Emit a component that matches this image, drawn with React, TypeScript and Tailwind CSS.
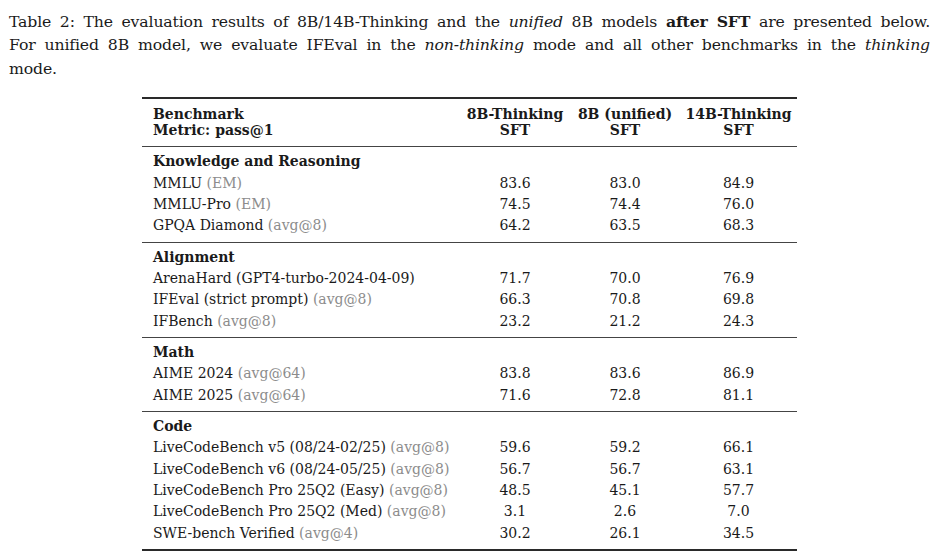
type Row = { name: string; note?: string; v: [string, string, string] }
type Section = { title: string; rows: Row[] }

const sections: Section[] = [
  {
    title: 'Knowledge and Reasoning',
    rows: [
      { name: 'MMLU', note: '(EM)', v: ['83.6', '83.0', '84.9'] },
      { name: 'MMLU-Pro', note: '(EM)', v: ['74.5', '74.4', '76.0'] },
      { name: 'GPQA Diamond', note: '(avg@8)', v: ['64.2', '63.5', '68.3'] },
    ],
  },
  {
    title: 'Alignment',
    rows: [
      { name: 'ArenaHard (GPT4-turbo-2024-04-09)', v: ['71.7', '70.0', '76.9'] },
      { name: 'IFEval (strict prompt)', note: '(avg@8)', v: ['66.3', '70.8', '69.8'] },
      { name: 'IFBench', note: '(avg@8)', v: ['23.2', '21.2', '24.3'] },
    ],
  },
  {
    title: 'Math',
    rows: [
      { name: 'AIME 2024', note: '(avg@64)', v: ['83.8', '83.6', '86.9'] },
      { name: 'AIME 2025', note: '(avg@64)', v: ['71.6', '72.8', '81.1'] },
    ],
  },
  {
    title: 'Code',
    rows: [
      { name: 'LiveCodeBench v5 (08/24-02/25)', note: '(avg@8)', v: ['59.6', '59.2', '66.1'] },
      { name: 'LiveCodeBench v6 (08/24-05/25)', note: '(avg@8)', v: ['56.7', '56.7', '63.1'] },
      { name: 'LiveCodeBench Pro 25Q2 (Easy)', note: '(avg@8)', v: ['48.5', '45.1', '57.7'] },
      { name: 'LiveCodeBench Pro 25Q2 (Med)', note: '(avg@8)', v: ['3.1', '2.6', '7.0'] },
      { name: 'SWE-bench Verified', note: '(avg@4)', v: ['30.2', '26.1', '34.5'] },
    ],
  },
]

function DataRow({ row }: { row: Row }) {
  return (
    <div className="flex leading-[21.33px]">
      <div className="w-[318px] pl-[11px] whitespace-nowrap">
        {row.name}
        {row.note && <span className="text-[#8c8c8c]"> {row.note}</span>}
      </div>
      <div className="w-[110px] text-center">{row.v[0]}</div>
      <div className="w-[110px] text-center">{row.v[1]}</div>
      <div className="flex-1 text-center">{row.v[2]}</div>
    </div>
  )
}

export default function App() {
  return (
    <div className="w-[940px] h-[558px] bg-white text-[#1a1a1a] font-['DejaVu_Serif',serif] overflow-hidden">
      {/* Caption */}
      <div className="pt-[10px] pl-[9px] pr-[10px] text-[15.7px] tracking-[-0.15px] leading-[23.3px]">
        <div className="whitespace-nowrap text-justify [text-align-last:justify]">
          Table 2: The evaluation results of 8B/14B-Thinking and the <i>unified</i> 8B models{' '}
          <b>after SFT</b> are presented below.
        </div>
        <div className="whitespace-nowrap text-justify [text-align-last:justify]">
          For unified 8B model, we evaluate IFEval in the <i>non-thinking</i> mode and all other
          benchmarks in the <i>thinking</i>
        </div>
        <div>mode.</div>
      </div>

      {/* Table */}
      <div className="mt-[17px] ml-[142px] w-[655px] text-[14px]">
        <div className="border-t-2 border-[#2a2a2a]" />
        <div className="flex pt-[7px] pb-[8px] font-bold leading-[16.3px] border-b border-[#444]">
          <div className="w-[318px] pl-[11px]">
            <div>Benchmark</div>
            <div>Metric: pass@1</div>
          </div>
          <div className="w-[110px] text-center">
            <div>8B-Thinking</div>
            <div>SFT</div>
          </div>
          <div className="w-[110px] text-center">
            <div>8B (unified)</div>
            <div>SFT</div>
          </div>
          <div className="flex-1 text-center">
            <div>14B-Thinking</div>
            <div>SFT</div>
          </div>
        </div>

        {sections.map((s, i) => (
          <div
            key={s.title}
            className={
              i < sections.length - 1
                ? 'pt-[4px] pb-[5px] border-b border-[#444]'
                : 'pt-[4px] pb-[5px] border-b-2 border-[#2a2a2a]'
            }
          >
            <div className="pl-[11px] font-bold leading-[21.33px]">{s.title}</div>
            {s.rows.map((r) => (
              <DataRow key={r.name} row={r} />
            ))}
          </div>
        ))}
      </div>
    </div>
  )
}
